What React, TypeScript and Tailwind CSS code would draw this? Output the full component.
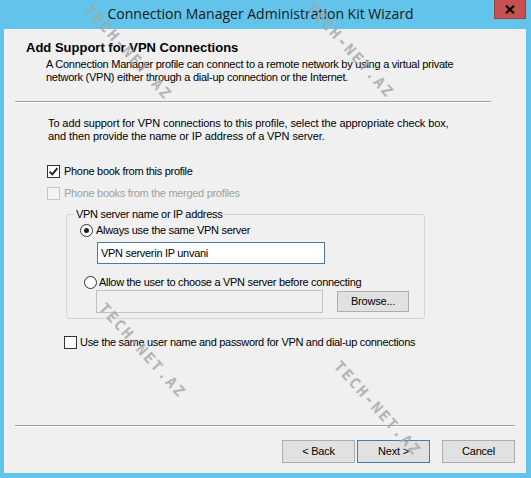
import React from "react";

const ui = { fontFamily: '"Liberation Sans", Arial, sans-serif' };

function CheckBox({ checked, disabled }: { checked?: boolean; disabled?: boolean }) {
  return (
    <span
      className={
        "flex h-[13px] w-[13px] shrink-0 items-center justify-center border " +
        (disabled ? "border-[#c6c6c6] bg-[#f4f4f4]" : "border-[#333333] bg-white")
      }
    >
      {checked && (
        <svg width="11" height="11" viewBox="0 0 11 11">
          <path d="M1.6 5.6 L4.3 8.3 L9.4 2.2" fill="none" stroke="#1e1e1e" strokeWidth="1.9" />
        </svg>
      )}
    </span>
  );
}

function Radio({ checked }: { checked?: boolean }) {
  return (
    <span className="flex h-[13px] w-[13px] shrink-0 items-center justify-center rounded-full border border-[#333333] bg-white">
      {checked && <span className="h-[5px] w-[5px] rounded-full bg-[#1e1e1e]" />}
    </span>
  );
}

function WinButton({ label, primary }: { label: string; primary?: boolean }) {
  return (
    <button
      type="button"
      className={
        "flex h-[23px] w-[73px] items-center justify-center border bg-[#e1e1e1] text-[11px] tracking-[-0.2px] text-black " +
        (primary ? "border-[#3c7fb1]" : "border-[#adadad]")
      }
    >
      {label}
    </button>
  );
}

function Watermark({ className }: { className: string }) {
  return (
    <div
      className={
        "pointer-events-none absolute origin-top-left rotate-[48deg] whitespace-nowrap text-[15px] font-bold tracking-[2px] text-[#a6a6a6] opacity-80 " +
        className
      }
      style={{ fontFamily: '"DejaVu Sans Mono", monospace' }}
    >
      TECH-NET.AZ
    </div>
  );
}

export default function App() {
  return (
    <div className="relative flex h-[478px] w-[531px] flex-col overflow-hidden bg-[#62c3eb]" style={ui}>
      {/* Title bar */}
      <div className="relative flex h-[29px] shrink-0 items-center justify-center pr-[10px]">
        <span
          className="mt-[-2px] text-[14px] text-[#1a1a1a]"
          style={{ fontFamily: '"Open Sans", "Noto Sans", sans-serif' }}
        >
          Connection Manager Administration Kit Wizard
        </span>
        <div className="absolute right-[5px] top-0 flex h-[19px] w-[32px] items-center justify-center border border-t-0 border-[#a23f3f] bg-[#c75050]">
          <svg width="10" height="9" viewBox="0 0 10 9">
            <path d="M1 0.8 L9 8.2 M9 0.8 L1 8.2" stroke="#000" strokeWidth="2.2" />
          </svg>
        </div>
      </div>

      {/* Client area */}
      <div className="ml-[4px] mr-[5px] flex h-[444px] flex-col bg-[#f0f0f0] text-[11px] leading-[13px] text-black">
        <div className="ml-[22px] mt-[11px] text-[13px] font-bold leading-[16px]">Add Support for VPN Connections</div>
        <div className="ml-[42px] mt-[2px] tracking-[-0.25px]">
          <div>A Connection Manager profile can connect to a remote network by using a virtual private</div>
          <div>network (VPN) either through a dial-up connection or the Internet.</div>
        </div>

        <div className="ml-[11px] mt-[17px] w-[476px] border-b border-t border-b-white border-t-[#a0a0a0]" />

        <div className="ml-[44px] mt-[14px] tracking-[-0.1px]">
          <div>To add support for VPN connections to this profile, select the appropriate check box,</div>
          <div>and then provide the name or IP address of a VPN server.</div>
        </div>

        <div className="flex flex-col tracking-[-0.3px]">
          <div className="ml-[43px] mt-[22px] flex items-center gap-[4px]">
            <CheckBox checked />
            <span>Phone book from this profile</span>
          </div>
          <div className="ml-[43px] mt-[9px] flex items-center gap-[4px] text-[#a0a0a0]">
            <CheckBox disabled />
            <span>Phone books from the merged profiles</span>
          </div>

          <fieldset className="ml-[62px] mt-[8px] w-[359px] rounded-[3px] border border-[#d5d5d5] pb-[5px]">
            <legend className="ml-[7px] px-[2px]">VPN server name or IP address</legend>
            <div className="ml-[13px] mt-[3px] flex items-center gap-[3px]">
              <Radio checked />
              <span>Always use the same VPN server</span>
            </div>
            <div className="ml-[30px] mt-[5px] flex h-[22px] w-[228px] items-center border border-[#4d78a6] bg-white px-[3px]">
              VPN serverin IP unvani
            </div>
            <div className="ml-[17px] mt-[12px] flex items-center gap-[2px]">
              <Radio />
              <span>Allow the user to choose a VPN server before connecting</span>
            </div>
            <div className="ml-[29px] mt-[1px] flex items-center gap-[14px]">
              <div className="h-[23px] w-[227px] border border-[#c2c2c2] bg-[#f0f0f0]" />
              <button
                type="button"
                className="flex h-[21px] w-[72px] items-center justify-center border border-[#adadad] bg-[#e1e1e1] text-[11px] tracking-[-0.2px]"
              >
                Browse...
              </button>
            </div>
          </fieldset>

          <div className="ml-[60px] mt-[17px] flex items-center gap-[3px]">
            <CheckBox />
            <span>Use the same user name and password for VPN and dial-up connections</span>
          </div>
        </div>

        <div className="ml-[11px] mt-[76px] w-[500px] border-b border-t border-b-white border-t-[#a0a0a0]" />

        <div className="mr-[11px] mt-[13px] flex justify-end">
          <WinButton label="< Back" />
          <div className="w-[2px]" />
          <WinButton label="Next >" primary />
          <div className="w-[12px]" />
          <WinButton label="Cancel" />
        </div>
      </div>

      <Watermark className="left-[96px] top-[0px]" />
      <Watermark className="left-[318px] top-[-2px]" />
      <Watermark className="left-[110px] top-[298px]" />
      <Watermark className="left-[345px] top-[356px]" />
    </div>
  );
}
